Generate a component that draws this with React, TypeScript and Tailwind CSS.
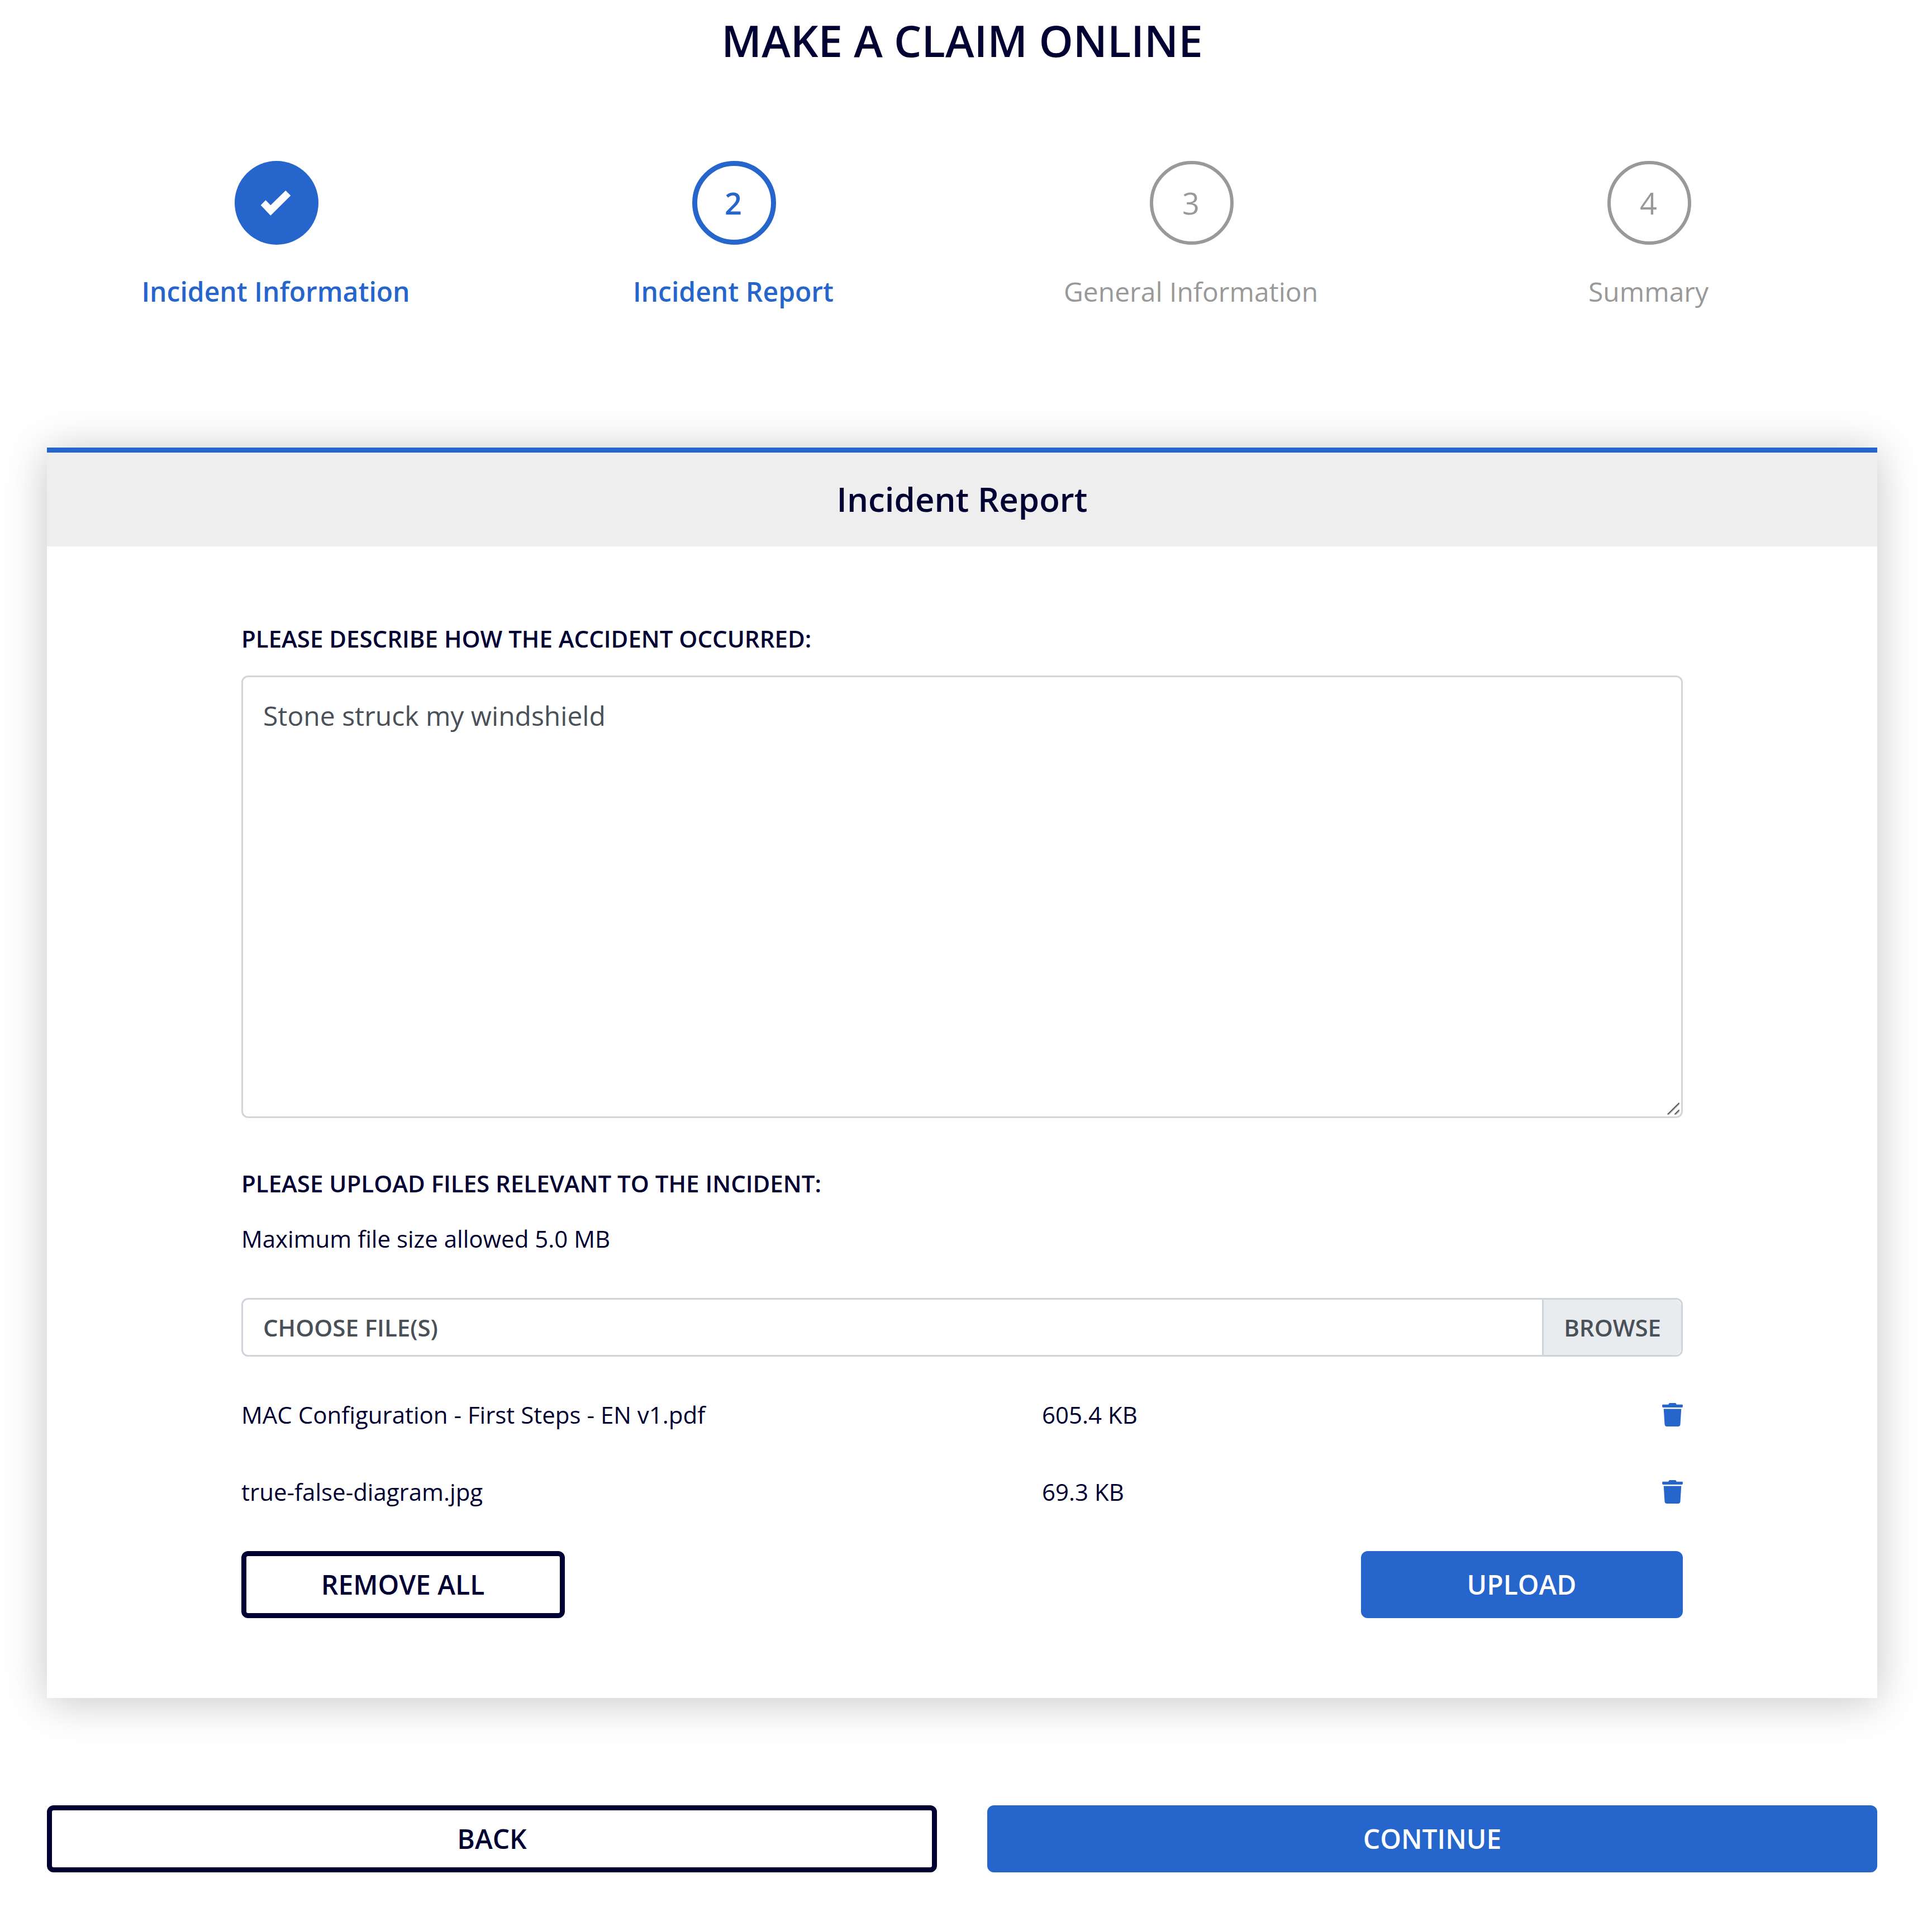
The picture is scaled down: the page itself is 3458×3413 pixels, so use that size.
import React from "react";

const steps = [
  { n: 1, label: "Incident Information", state: "done" },
  { n: 2, label: "Incident Report", state: "current" },
  { n: 3, label: "General Information", state: "todo" },
  { n: 4, label: "Summary", state: "todo" },
];

const files = [
  { name: "MAC Configuration - First Steps - EN v1.pdf", size: "605.4 KB" },
  { name: "true-false-diagram.jpg", size: "69.3 KB" },
];

const circleStyles: Record<string, string> = {
  done: "bg-[#2665cc]",
  current: "border-[9px] border-[#2665cc] font-semibold",
  todo: "border-[6px] border-[#999999]",
};

function Step({ n, label, state }: { n: number; label: string; state: string }) {
  return (
    <li
      className={
        state === "todo"
          ? "flex flex-col items-center text-[#999999]"
          : "flex flex-col items-center font-semibold text-[#2665cc]"
      }
    >
      <div
        className={`ml-[3px] flex size-[150px] items-center justify-center rounded-full text-[54px] leading-[54px] ${circleStyles[state]}`}
      >
        {state === "done" ? (
          <svg className="size-[150px]" viewBox="0 0 150 150" fill="white">
            <path d="M91.2 53 L100.3 62 L64.3 97.8 L46.7 79.3 L55.5 70.3 L64.3 79.3 Z" />
          </svg>
        ) : (
          <span className="mr-[3px]">{n}</span>
        )}
      </div>
      <span className="mt-[48px] text-[48px] leading-[72px]">{label}</span>
    </li>
  );
}

function TrashIcon() {
  return (
    <svg className="h-[42px] w-[37px]" viewBox="0 0 448 512" fill="#2665cc">
      <path d="M432 32H312l-9.4-18.700A24 24 0 0 0 281.1 0H166.800a23.720 23.720 0 0 0-21.400 13.300L136 32H16A16 16 0 0 0 0 48v32a16 16 0 0 0 16 16h416a16 16 0 0 0 16-16V48a16 16 0 0 0-16-16zM53.200 467a48 48 0 0 0 47.900 45h245.800a48 48 0 0 0 47.900-45L416 128H32z" />
    </svg>
  );
}

export default function App() {
  return (
    <main className="flex min-h-[3413px] w-[3458px] flex-col overflow-hidden bg-white pr-[98px] pl-[84px] font-['Open_Sans',sans-serif] text-[#000033]">
      <h1 className="mt-[18px] text-center text-[78px] leading-[108px] font-semibold">MAKE A CLAIM ONLINE</h1>

      <ol className="mt-[162px] grid grid-cols-4">
        {steps.map((s) => (
          <Step key={s.n} {...s} />
        ))}
      </ol>

      <section className="mt-[243px] h-[2238px] border-t-[9px] border-[#2665cc] bg-white shadow-[0_6px_72px_rgba(0,0,0,0.23)]">
        <h2 className="flex h-[168px] items-center justify-center bg-[#eeeeee] pb-[3px] text-[60px] leading-[90px] font-semibold">
          Incident Report
        </h2>
        <div className="px-[348px] pt-[133px] text-[42px] leading-[63px]">
          <label className="block font-semibold">PLEASE DESCRIBE HOW THE ACCIDENT OCCURRED:</label>
          <div className="relative mt-[35px] h-[792px] rounded-[12px] border-[3px] border-[#d1d6db] px-[36px] py-[33px] text-[48px] leading-[72px] text-[#495057]">
            Stone struck my windshield
            <svg className="absolute right-[3px] bottom-[3px] size-[24px]" viewBox="0 0 24 24" strokeWidth="2">
              <path d="M4.500 24 L24 4.500 M17.500 24 L24 17.500" stroke="#c4c4c4" />
              <path d="M2.800 23.500 L23.500 3 M15.500 23.500 L23.500 15.500" stroke="#5a5a5a" />
            </svg>
          </div>
          <p className="mt-[85px] font-semibold">PLEASE UPLOAD FILES RELEVANT TO THE INCIDENT:</p>
          <p className="mt-[36px]">Maximum file size allowed 5.0 MB</p>

          <div className="mt-[75px] flex h-[105px] items-center overflow-hidden rounded-[12px] border-[3px] border-[#ced4da] font-semibold text-[#495057]">
            <span className="grow pl-[36px]">CHOOSE FILE(S)</span>
            <span className="flex h-full items-center rounded-r-[12px] border-l-[3px] border-[#ced4da] bg-[#e9ecef] px-[36px]">
              BROWSE
            </span>
          </div>

          <ul className="mt-[72px]">
            {files.map((f) => (
              <li key={f.name} className="mb-[75px] grid h-[63px] grid-cols-[1433px_1fr_auto] items-center">
                <span>{f.name}</span>
                <span>{f.size}</span>
                <TrashIcon />
              </li>
            ))}
          </ul>

          <div className="flex justify-between text-[48px] leading-[72px] font-semibold">
            <button className="h-[120px] w-[579px] rounded-[12px] border-[9px] border-[#000033] pr-[1px]">REMOVE ALL</button>
            <button className="h-[120px] w-[576px] rounded-[12px] bg-[#2665cc] pr-[1px] text-white">UPLOAD</button>
          </div>
        </div>
      </section>

      <div className="mt-[192px] grid grid-cols-2 gap-[90px] text-[48px] leading-[72px] font-semibold">
        <button className="h-[120px] rounded-[12px] border-[9px] border-[#000033]">BACK</button>
        <button className="h-[120px] rounded-[12px] bg-[#2665cc] text-white">CONTINUE</button>
      </div>
    </main>
  );
}
